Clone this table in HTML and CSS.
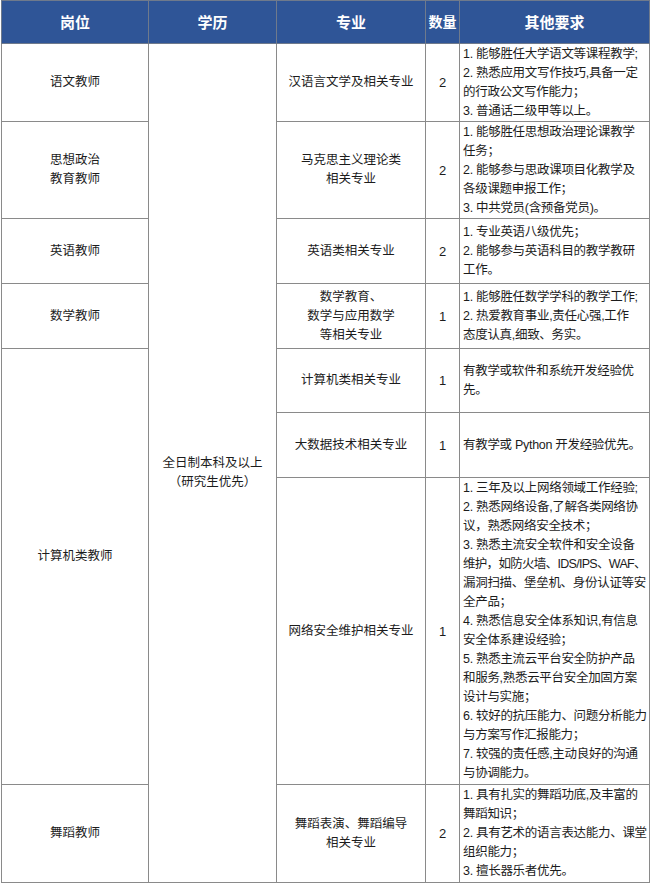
FILE: index.html
```html
<!DOCTYPE html>
<html lang="zh-CN">
<head>
<meta charset="utf-8">
<title>岗位要求</title>
<link rel="stylesheet" href="styles.css">
</head>
<body>
<table class="jobs">
  <colgroup>
    <col class="c-post">
    <col class="c-edu">
    <col class="c-major">
    <col class="c-num">
    <col class="c-req">
  </colgroup>
  <thead>
    <tr class="r-head">
      <th>岗位</th>
      <th>学历</th>
      <th>专业</th>
      <th class="th-num">数量</th>
      <th>其他要求</th>
    </tr>
  </thead>
  <tbody>
    <tr class="r1">
      <td class="post">语文教师</td>
      <td class="edu" rowspan="8"><div class="edu-text">全日制本科及以上<br>（研究生优先）</div></td>
      <td class="major">汉语言文学及相关专业</td>
      <td class="num">2</td>
      <td class="req">1. 能够胜任大学语文等课程教学;<br>2. 熟悉应用文写作技巧,具备一定<br>的行政公文写作能力；<br>3. 普通话二级甲等以上。</td>
    </tr>
    <tr class="r2">
      <td class="post">思想政治<br>教育教师</td>
      <td class="major">马克思主义理论类<br>相关专业</td>
      <td class="num">2</td>
      <td class="req">1. 能够胜任思想政治理论课教学<br>任务；<br>2. 能够参与思政课项目化教学及<br>各级课题申报工作；<br>3. 中共党员(含预备党员)。</td>
    </tr>
    <tr class="r3">
      <td class="post">英语教师</td>
      <td class="major">英语类相关专业</td>
      <td class="num">2</td>
      <td class="req">1. 专业英语八级优先；<br>2. 能够参与英语科目的教学教研<br>工作。</td>
    </tr>
    <tr class="r4">
      <td class="post">数学教师</td>
      <td class="major">数学教育、<br>数学与应用数学<br>等相关专业</td>
      <td class="num">1</td>
      <td class="req">1. 能够胜任数学学科的教学工作;<br>2. 热爱教育事业,责任心强,工作<br>态度认真,细致、务实。</td>
    </tr>
    <tr class="r5">
      <td class="post" rowspan="3"><div class="post-cs">计算机类教师</div></td>
      <td class="major">计算机类相关专业</td>
      <td class="num">1</td>
      <td class="req">有教学或软件和系统开发经验优<br>先。</td>
    </tr>
    <tr class="r6">
      <td class="major">大数据技术相关专业</td>
      <td class="num">1</td>
      <td class="req">有教学或 Python 开发经验优先。</td>
    </tr>
    <tr class="r7">
      <td class="major">网络安全维护相关专业</td>
      <td class="num">1</td>
      <td class="req">1. 三年及以上网络领域工作经验;<br>2. 熟悉网络设备,了解各类网络协<br>议，熟悉网络安全技术；<br>3. 熟悉主流安全软件和安全设备<br><span class="squeeze">维护，如防火墙、IDS/IPS、WAF、</span><br>漏洞扫描、堡垒机、身份认证等安<br>全产品；<br>4. 熟悉信息安全体系知识,有信息<br>安全体系建设经验；<br>5. 熟悉主流云平台安全防护产品<br>和服务,熟悉云平台安全加固方案<br>设计与实施；<br>6. 较好的抗压能力、问题分析能力<br>与方案写作汇报能力；<br>7. 较强的责任感,主动良好的沟通<br>与协调能力。</td>
    </tr>
    <tr class="r8">
      <td class="post">舞蹈教师</td>
      <td class="major">舞蹈表演、舞蹈编导<br>相关专业</td>
      <td class="num">2</td>
      <td class="req">1. 具有扎实的舞蹈功底,及丰富的<br>舞蹈知识；<br>2. 具有艺术的语言表达能力、课堂<br>组织能力；<br>3. 擅长器乐者优先。</td>
    </tr>
  </tbody>
</table>
</body>
</html>
```

FILE: styles.css
```css
html, body {
  margin: 0;
  padding: 0;
  background: #ffffff;
}

body {
  font-family: "Liberation Sans", "Noto Sans CJK SC", sans-serif;
  color: #1c1c1c;
}

.jobs {
  margin: 0 0 0 1px;
  width: 648px;
  table-layout: fixed;
  border-collapse: collapse;
  font-size: 12.5px;
}

.c-post { width: 147px; }
.c-edu { width: 128px; }
.c-major { width: 149px; }
.c-num { width: 34px; }
.c-req { width: 190px; }

.jobs th,
.jobs td {
  border: 1px solid #8a8a8a;
  padding: 0 2px;
  vertical-align: middle;
  text-align: center;
  line-height: 19px;
}

.jobs th {
  background: #2f5597;
  color: #ffffff;
  font-size: 15px;
  font-weight: bold;
  border-color: #6f7a8c;
}

.jobs th.th-num {
  font-size: 14px;
  padding: 0;
}

.r-head { height: 43px; }
.r1 { height: 78px; }
.r2 { height: 97px; }
.r3 { height: 65px; }
.r4 { height: 65px; }
.r5 { height: 64px; }
.r6 { height: 65px; }
.r7 { height: 307px; }
.r8 { height: 98px; }

.post,
.major,
.edu {
  line-height: 18.5px;
}

.edu-text {
  padding-top: 19px;
}

.post-cs {
  padding-bottom: 20px;
}

.num {
  font-size: 13px;
}

.jobs td.req {
  text-align: left;
  white-space: nowrap;
  padding: 0 1px 0 3px;
  letter-spacing: -0.3px;
}

.squeeze {
  letter-spacing: -0.7px;
}
```
